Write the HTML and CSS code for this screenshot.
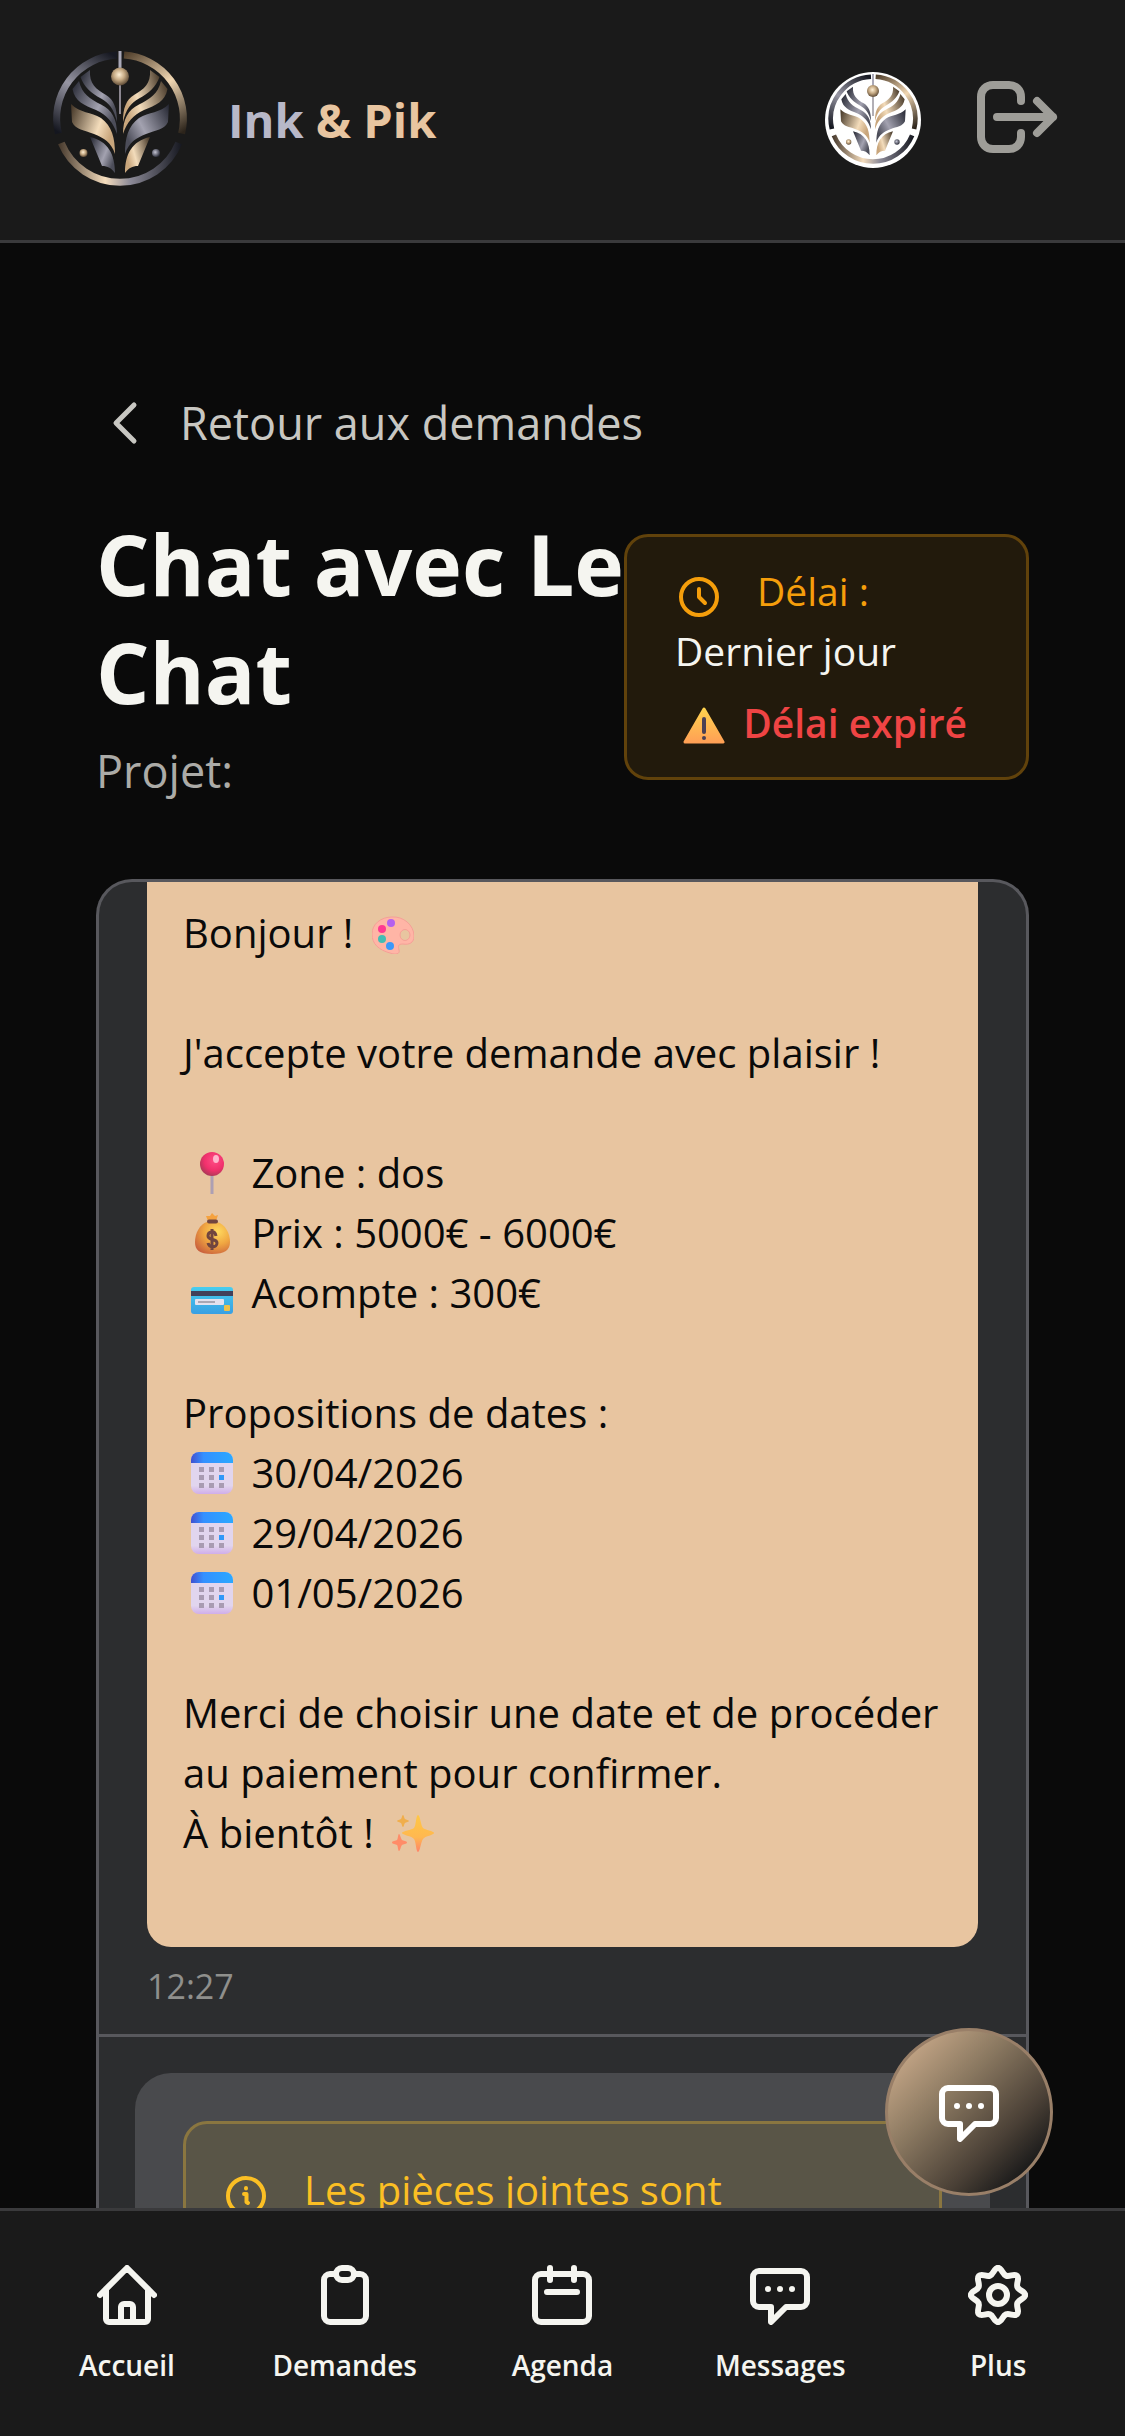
FILE: index.html
```html
<!DOCTYPE html>
<html lang="fr">
<head>
<meta charset="utf-8">
<meta name="viewport" content="width=device-width, initial-scale=1">
<title>Ink &amp; Pik</title>
<link rel="stylesheet" href="styles.css">
</head>
<body>
<!-- Shared symbols -->
<svg class="defs" aria-hidden="true">
  <defs>
    <linearGradient id="silver" x1="0" y1="0" x2="1" y2="0.6"><stop offset="0" stop-color="#22242f"/><stop offset="0.65" stop-color="#a3a2b0"/><stop offset="1" stop-color="#4c4d59"/></linearGradient>
    <linearGradient id="gold" x1="0" y1="0" x2="1" y2="0.4"><stop offset="0" stop-color="#3f3122"/><stop offset="0.7" stop-color="#f3dcbb"/><stop offset="1" stop-color="#c9a67c"/></linearGradient>
    <linearGradient id="ring-silver" gradientUnits="userSpaceOnUse" x1="60" y1="4" x2="10" y2="84"><stop offset="0" stop-color="#171922"/><stop offset="0.5" stop-color="#9796a3"/><stop offset="1" stop-color="#14161f"/></linearGradient>
    <linearGradient id="ring-gold" gradientUnits="userSpaceOnUse" x1="76" y1="4" x2="132" y2="86"><stop offset="0" stop-color="#4a3926"/><stop offset="0.5" stop-color="#f1d7b3"/><stop offset="1" stop-color="#2c241b"/></linearGradient>
    <linearGradient id="ring-low" gradientUnits="userSpaceOnUse" x1="10" y1="0" x2="134" y2="0"><stop offset="0" stop-color="#43362a"/><stop offset="0.38" stop-color="#f5ddbd"/><stop offset="0.58" stop-color="#8d8b98"/><stop offset="1" stop-color="#15171f"/></linearGradient>
    <radialGradient id="ball" cx="0.45" cy="0.4" r="0.6"><stop offset="0" stop-color="#fff0d5"/><stop offset="0.5" stop-color="#c6aa84"/><stop offset="1" stop-color="#5d4a35"/></radialGradient>
    <radialGradient id="bead" cx="0.4" cy="0.4" r="0.6"><stop offset="0" stop-color="#c3c3d2"/><stop offset="1" stop-color="#30323e"/></radialGradient>
    <path id="leaf-a" d="M42 22C41 36 48 41 58 47C66 52 69 60 69 74C66 61 61 55 53 50.500C43 45 36 39 32.500 29Z"/>
    <path id="leaf-b" d="M31 33C34 46 42 51 53 56.500C64 62 69 71 69 86C65 74 59 67 48 62C36 57 27 54 24.500 41Z"/>
    <path id="leaf-c" d="M23 56C32 65 43 64 53 70C64 78 67 90 67 106C63 94 56 90 46 86C36 82 28 82 24 74Z"/>
    <path id="leaf-d" d="M42 89C60 93 67 106 67 125C63 120 60 118 54 118Z"/>
    <symbol id="emblem" viewBox="0 0 144 144">
      <g fill="none" stroke-width="7">
        <path d="M69 7.100A63.500 63.500 0 0 0 10.400 85.500" stroke="url(#ring-silver)"/>
        <path d="M76 7.100A63.500 63.500 0 0 1 133.600 85.500" stroke="url(#ring-gold)"/>
        <path d="M13.300 95A63.500 63.500 0 0 0 130.700 95" stroke="url(#ring-low)"/>
      </g>
      <path d="M72 3V20" stroke="#aaa9b8" stroke-width="3"/>
      <path d="M72 37V66" stroke="#8c8790" stroke-width="2"/>
      <circle cx="72" cy="28.500" r="9" fill="url(#ball)"/>
      <g fill="url(#silver)"><use href="#leaf-a"/><use href="#leaf-b"/><use href="#leaf-d"/></g>
      <use href="#leaf-c" fill="url(#gold)"/>
      <g transform="translate(144 0) scale(-1 1)">
        <g fill="url(#gold)"><use href="#leaf-a"/><use href="#leaf-b"/><use href="#leaf-d"/></g>
        <use href="#leaf-c" fill="url(#silver)"/>
      </g>
      <circle cx="35.500" cy="105" r="4" fill="url(#ball)"/>
      <circle cx="108" cy="105" r="4" fill="url(#bead)"/>
    </symbol>
    <symbol id="bubble" viewBox="0 0 60 60">
      <path d="M9 6H51A6 6 0 0 1 57 12V36A6 6 0 0 1 51 42H36L21 57V42H9A6 6 0 0 1 3 36V12A6 6 0 0 1 9 6Z" fill="none" stroke="currentColor" stroke-width="6" stroke-linejoin="round"/>
      <g fill="currentColor" stroke="none"><circle cx="18" cy="24" r="3"/><circle cx="30" cy="24" r="3"/><circle cx="42" cy="24" r="3"/></g>
    </symbol>
    <linearGradient id="cal-top" x1="0" y1="0" x2="1" y2="0"><stop offset="0" stop-color="#4150d0"/><stop offset="0.3" stop-color="#3490ff"/><stop offset="1" stop-color="#2ba8ff"/></linearGradient>
    <linearGradient id="cal-body" x1="0" y1="0" x2="0" y2="1"><stop offset="0.8" stop-color="#e1d5ee"/><stop offset="1" stop-color="#d0aeea"/></linearGradient>
    <symbol id="calendar" viewBox="0 0 42 42">
      <rect width="42" height="42" rx="8" fill="url(#cal-body)"/>
      <path d="M8 0H34A8 8 0 0 1 42 8V11H0V8A8 8 0 0 1 8 0Z" fill="url(#cal-top)"/>
      <path d="M8 15h5v5H8zM18 15h5v5h-5zM28 15h5v5h-5zM8 23h5v5H8zM18 23h5v5h-5zM8 31h5v5H8zM18 31h5v5h-5zM28 31h5v5h-5z" fill="#a89bb2"/>
      <path d="M28 23h5v5h-5z" fill="#2f98f8"/>
    </symbol>
    <linearGradient id="amber" x1="0" y1="0" x2="0" y2="1"><stop offset="0" stop-color="#ffd24e"/><stop offset="1" stop-color="#ffa055"/></linearGradient>
    <linearGradient id="spark" x1="0" y1="0" x2="0" y2="1"><stop offset="0" stop-color="#ffc745"/><stop offset="0.6" stop-color="#ffb850"/><stop offset="1" stop-color="#ff8368"/></linearGradient>
    <radialGradient id="pin-head" cx="0.6" cy="0.35" r="0.7"><stop offset="0" stop-color="#ff4d85"/><stop offset="0.6" stop-color="#f0306c"/><stop offset="1" stop-color="#a63a56"/></radialGradient>
    <radialGradient id="bag" cx="0.65" cy="0.3" r="0.8"><stop offset="0" stop-color="#ffd95e"/><stop offset="0.5" stop-color="#f0a641"/><stop offset="1" stop-color="#c95f3d"/></radialGradient>
    <linearGradient id="card-face" x1="0" y1="0" x2="0" y2="1"><stop offset="0" stop-color="#47cdee"/><stop offset="1" stop-color="#399fe3"/></linearGradient>
    <path id="gear-quarter" d="M30 3C34 3 34.300 9.100 38 10.600C41.700 12.100 46.300 8.100 49.100 10.900C51.900 13.700 47.900 18.300 49.400 22C50.900 25.700 57 26 57 30"/>
  </defs>
</svg>

<div class="app">
  <header class="topbar">
    <a class="brand" href="#">
      <svg class="brand-logo" aria-hidden="true"><use href="#emblem"/></svg>
      <span class="brand-name">Ink <span class="brand-accent">&amp; Pik</span></span>
    </a>
    <div class="topbar-actions">
      <a class="avatar" href="#" aria-label="Profil"><svg aria-hidden="true"><use href="#emblem"/></svg></a>
      <button class="logout" type="button" aria-label="Se déconnecter">
        <svg viewBox="0 3 96 96" aria-hidden="true"><path d="M52 32V28C52 21 47 16 40 16H24C17 16 12 21 12 28V68C12 75 17 80 24 80H40C47 80 52 75 52 68V64M28 48H84M68 32L84 48L68 64"/></svg>
      </button>
    </div>
  </header>

  <main class="page">
    <a class="back" href="#">
      <svg viewBox="0 0 60 60" aria-hidden="true"><path d="M38 12L20 30L38 48"/></svg>
      Retour aux demandes
    </a>

    <div class="heading">
      <div class="heading-text">
        <h1>Chat avec Le<br>Chat</h1>
        <p class="project">Projet:</p>
      </div>
      <aside class="deadline">
        <p class="icon-line deadline-label">
          <svg class="line-icon" viewBox="0 0 48 48" aria-hidden="true"><circle cx="24" cy="24" r="18"/><path d="M24 16V24L30 30"/></svg>
          Délai :
        </p>
        <p>Dernier jour</p>
        <p class="deadline-over"><svg class="emoji" viewBox="0 0 42 42" aria-hidden="true"><path d="M21 7L40 40H2Z" fill="url(#amber)" stroke="url(#amber)" stroke-width="3" stroke-linejoin="round"/><path d="M21 17V30" stroke="#4b4054" stroke-width="4" stroke-linecap="round"/><circle cx="21" cy="36" r="2" fill="#4b4054"/></svg> Délai expiré</p>
      </aside>
    </div>

    <section class="chat">
      <div class="messages">
        <article class="message">
          <p>Bonjour ! <svg class="emoji" viewBox="0 0 42 42" aria-hidden="true"><path fill-rule="evenodd" d="M20 5C31 4 42 13 42 24C42 31 37 33 31 32C26 32 26 34 27 38C28 42 24 43 18 41C7 38 0 32 0 22C0 12 9 5 20 5ZM33 17.500A5 5.500 0 1 0 33 28.500A5 5.500 0 1 0 33 17.500Z" fill="#ffb5a6" stroke="#f59f97" stroke-width="1"/><circle cx="19" cy="11" r="4" fill="#b560ee"/><circle cx="10" cy="17" r="4" fill="#ff3a91"/><circle cx="10" cy="27" r="4" fill="#43bdb4"/><circle cx="18" cy="34" r="4" fill="#3b98fa"/></svg></p>
          <p>J'accepte votre demande avec plaisir !</p>
          <p>
            <svg class="emoji" viewBox="0 0 42 42" aria-hidden="true"><path d="M21 22V42" stroke="#ad9fb3" stroke-width="3"/><circle cx="21" cy="12" r="12" fill="url(#pin-head)"/><ellipse cx="25" cy="7" rx="3" ry="4" fill="#ffb5cc"/></svg> Zone : dos<br>
            <svg class="emoji" viewBox="0 0 42 42" aria-hidden="true"><path d="M17 9L15 4L19 4L21 1L24 4L27 3L25 9Z" fill="#f5a23f"/><path d="M16 10H26C34 12 39 21 39 30C39 38 34 42 21 42S4 38 4 30C4 21 9 12 16 10Z" fill="url(#bag)"/><path d="M18 9.500H25" stroke="#71453f" stroke-width="4" stroke-linecap="round"/><path d="M25 24C24 18 17 19 17 24C17 29 26 26 26 31C26 36 18 36 17 31M21 17V38" fill="none" stroke="#71453f" stroke-width="3"/></svg> Prix : 5000€ - 6000€<br>
            <svg class="emoji" viewBox="0 0 42 42" aria-hidden="true"><rect y="15" width="42" height="27" rx="3" fill="url(#card-face)"/><path d="M0 19H42V24H0Z" fill="#42405a"/><rect x="4" y="27" width="29" height="6" rx="1" fill="#e4e1ee"/><path d="M7 30H24" stroke="#aaa7b4" stroke-width="2"/><rect x="33" y="33" width="6" height="6" rx="1" fill="#eec14c"/></svg> Acompte : 300€
          </p>
          <p>
            Propositions de dates :<br>
            <svg class="emoji" aria-hidden="true"><use href="#calendar"/></svg> 30/04/2026<br>
            <svg class="emoji" aria-hidden="true"><use href="#calendar"/></svg> 29/04/2026<br>
            <svg class="emoji" aria-hidden="true"><use href="#calendar"/></svg> 01/05/2026
          </p>
          <p>
            Merci de choisir une date et de procéder au paiement pour confirmer.<br>
            À bientôt ! <svg class="emoji" viewBox="0 0 42 42" aria-hidden="true"><path d="M26 3C28 3 29 14 31 16C33 18 42 19 42 21S33 24 31 27C29 29 28 40 26 40S24 29 22 27C20 24 10 23 10 21S20 18 22 16C24 14 24 3 26 3Z" fill="url(#spark)"/><path d="M11 3C12 3 12 6 13 7C14 8 17 8 17 9S14 10 13 11C12 12 12 15 11 15S10 12 9 11C8 10 5 10 5 9S8 8 9 7C10 6 10 3 11 3Z" fill="#f0ae4c"/><path d="M7 22C8 22 9 27 10 28C11 29 15 29 15 30.500S11 32 10 33C9 34 8 39 7 39S6 34 5 33C4 32 0 32 0 30.500S4 29 5 28C6 27 6 22 7 22Z" fill="#ff8c68"/></svg>
          </p>
        </article>
        <time class="stamp">12:27</time>
      </div>

      <div class="composer">
        <div class="composer-box">
          <div class="icon-line notice">
            <svg class="line-icon" viewBox="0 0 48 48" aria-hidden="true"><circle cx="24" cy="24" r="18"/><path d="M22 22H24.500V30L26 31M24 16V16.500"/></svg>
            Les pièces jointes sont
          </div>
        </div>
      </div>
    </section>

    <button class="fab" type="button" aria-label="Ouvrir la messagerie"><svg aria-hidden="true"><use href="#bubble"/></svg></button>
  </main>

  <nav class="tabs" aria-label="Navigation principale">
    <a href="#"><svg viewBox="0 0 60 60" aria-hidden="true"><path d="M3 30L30 3L57 30M9 24V54A3 3 0 0 0 12 57H48A3 3 0 0 0 51 54V24M24 57V42A3 3 0 0 1 27 39H33A3 3 0 0 1 36 42V57"/></svg>Accueil</a>
    <a href="#"><svg viewBox="0 0 60 60" aria-hidden="true"><rect x="9" y="9" width="42" height="48" rx="6"/><rect class="clip" x="21" y="3" width="18" height="12" rx="6"/></svg>Demandes</a>
    <a href="#"><svg viewBox="0 0 60 60" aria-hidden="true"><rect x="3" y="9" width="54" height="48" rx="6"/><path d="M18 3V15M42 3V15M15 27H45"/></svg>Agenda</a>
    <a href="#"><svg aria-hidden="true"><use href="#bubble"/></svg>Messages</a>
    <a href="#"><svg viewBox="0 0 60 60" aria-hidden="true"><use href="#gear-quarter"/><use href="#gear-quarter" transform="rotate(90 30 30)"/><use href="#gear-quarter" transform="rotate(180 30 30)"/><use href="#gear-quarter" transform="rotate(270 30 30)"/><circle cx="30" cy="30" r="9"/></svg>Plus</a>
  </nav>
</div>
</body>
</html>
```
FILE: styles.css
```css
* {
  box-sizing: border-box;
}

body,
h1,
p {
  margin: 0;
}

body {
  background: #0a0a0a;
  color: #f5f5f0;
  font-family: "Open Sans", "Noto Sans", sans-serif;
  font-size: 40px;
  line-height: 60px;
}

a {
  color: inherit;
  text-decoration: none;
}

button {
  padding: 0;
  border: 0;
  background: none;
  color: inherit;
  font: inherit;
}

svg {
  display: block;
}

.defs {
  position: absolute;
  width: 0;
  height: 0;
}

.app {
  display: grid;
  grid-template-rows: auto minmax(0, 1fr) auto;
  height: 100vh;
}

/* Top bar */
.topbar {
  display: flex;
  align-items: center;
  justify-content: space-between;
  padding: 48px 60px 48px 48px;
  border-bottom: 3px solid #3a3a3c;
  background: #1a1a1a;
}

.brand {
  display: flex;
  align-items: center;
  gap: 36px;
}

.brand-logo {
  width: 144px;
  height: 144px;
}

.brand-name {
  color: #b8b8c8;
  font-size: 47px;
  font-weight: 700;
}

.brand-accent {
  color: #e8c5a0;
}

.topbar-actions {
  display: flex;
  align-items: center;
  gap: 48px;
}

.avatar svg {
  width: 96px;
  height: 96px;
  border-radius: 50%;
  background: #fff;
}

.logout svg {
  width: 96px;
  height: 96px;
  fill: none;
  stroke: #9e9d98;
  stroke-width: 8;
  stroke-linecap: round;
  stroke-linejoin: round;
}

/* Page */
.page {
  position: relative;
  overflow: hidden;
  padding: 144px 96px 0;
}

.back {
  display: flex;
  align-items: center;
  gap: 24px;
  color: #c8c7c2;
  font-size: 45px;
  line-height: 72px;
}

.back svg {
  width: 60px;
  height: 60px;
  fill: none;
  stroke: currentColor;
  stroke-width: 5;
  stroke-linecap: round;
  stroke-linejoin: round;
}

.heading {
  display: flex;
  align-items: center;
  justify-content: space-between;
  margin: 51px 0 75px;
}

.heading-text {
  min-width: 0;
}

h1 {
  font-size: 84px;
  font-weight: 700;
  line-height: 108px;
  white-space: nowrap;
}

.project {
  margin-top: 12px;
  color: #acaba7;
  font-size: 45px;
  line-height: 66px;
}

.deadline {
  flex: 0 0 405px;
  padding: 24px 0 24px 48px;
  border: 3px solid #61420b;
  border-radius: 24px;
  background: #221a0c;
  font-size: 39px;
}

.icon-line {
  display: flex;
  align-items: flex-end;
  gap: 34px;
}

.line-icon {
  width: 48px;
  height: 48px;
  fill: none;
  stroke: currentColor;
  stroke-width: 4;
  stroke-linecap: round;
  stroke-linejoin: round;
}

.deadline-label {
  color: #f59e0b;
}

.deadline-over {
  margin-top: 12px;
  color: #ef4444;
  font-weight: 600;
}

.emoji {
  display: inline-block;
  width: 42px;
  height: 42px;
  margin: 0 8px;
  vertical-align: -6px;
}

/* Conversation */
.chat {
  overflow: hidden;
  border: 3px solid #58585d;
  border-bottom: 0;
  border-radius: 36px 36px 0 0;
  background: #2c2d2f;
}

.messages {
  padding: 0 48px 24px;
}

.message {
  display: grid;
  gap: 60px;
  padding: 21px 36px 84px;
  border-radius: 0 0 24px 24px;
  background: #e8c5a0;
  color: #0a0a0a;
}

.stamp {
  display: block;
  margin-top: 15px;
  color: #8f8f8c;
  font-size: 34px;
  line-height: 48px;
}

.composer {
  padding: 36px;
  border-top: 3px solid #58585d;
}

.composer-box {
  padding: 48px;
  border-radius: 36px;
  background: #494a4d;
}

.notice {
  padding: 36px;
  border: 3px solid #8a7640;
  border-radius: 24px;
  background: #595547;
  color: #fbbf24;
}

/* Floating chat button, over the conversation */
.fab {
  position: absolute;
  right: 72px;
  bottom: 12px;
  display: grid;
  place-items: center;
  width: 168px;
  height: 168px;
  border: 3px solid #997f68;
  border-radius: 50%;
  background: linear-gradient(135deg, #dcb896 0%, #8b7961 38%, #4a4036 68%, #1a1a1a 86%);
  color: #fff;
}

.fab svg {
  width: 60px;
  height: 60px;
}

/* Bottom tabs */
.tabs {
  display: grid;
  grid-template-columns: repeat(5, 1fr);
  padding: 54px 18px 48px;
  border-top: 3px solid #3a3a3c;
  background: #1a1a1a;
}

.tabs a {
  display: flex;
  flex-direction: column;
  align-items: center;
  gap: 18px;
  font-size: 28px;
  font-weight: 600;
  line-height: 45px;
}

.tabs svg {
  width: 60px;
  height: 60px;
  fill: none;
  stroke: currentColor;
  stroke-width: 6;
  stroke-linecap: round;
  stroke-linejoin: round;
}

.tabs .clip {
  fill: #1a1a1a;
}
```
